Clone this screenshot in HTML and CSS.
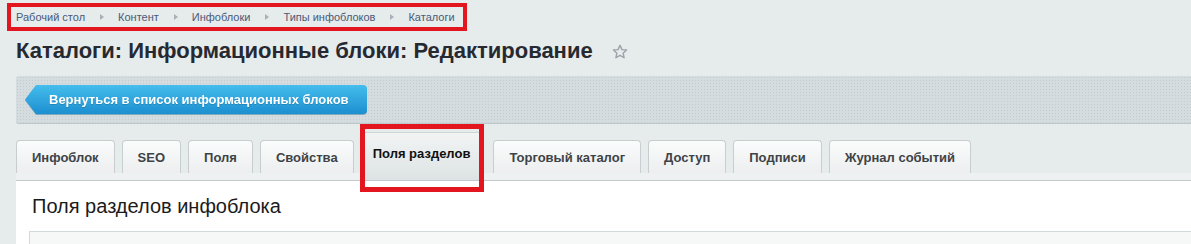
FILE: index.html
```html
<!DOCTYPE html>
<html lang="ru">
<head>
<meta charset="utf-8">
<title>Каталоги: Информационные блоки: Редактирование</title>
<link rel="stylesheet" href="styles.css">
</head>
<body>
<div class="page">
  <div class="crumbs-wrap">
    <nav class="crumbs">
      <a class="crumb">Рабочий стол</a><span class="sep"></span>
      <a class="crumb">Контент</a><span class="sep"></span>
      <a class="crumb">Инфоблоки</a><span class="sep"></span>
      <a class="crumb">Типы инфоблоков</a><span class="sep"></span>
      <a class="crumb">Каталоги</a>
    </nav>
  </div>
  <div class="title-row">
    <h1 class="title">Каталоги: Информационные блоки: Редактирование</h1>
    <svg class="star" width="16" height="16" viewBox="0 0 16 16"><path d="M8 1.3l1.95 4.3 4.6.45-3.45 3.1 1 4.6L8 11.4l-4.1 2.35 1-4.6L1.45 6.05l4.6-.45z" fill="none" stroke="#9aa3a8" stroke-width="1.4" stroke-linejoin="round"/></svg>
  </div>
  <div class="main">
    <div class="toolbar">
      <a class="back-btn"><span class="back-arrow"></span><span class="back-body">Вернуться в список информационных блоков</span></a>
    </div>
    <div class="tabs">
      <div class="tab">Инфоблок</div>
      <div class="tab">SEO</div>
      <div class="tab">Поля</div>
      <div class="tab">Свойства</div>
      <div class="tab tab-active">Поля разделов<span class="mark"></span></div>
      <div class="tab">Торговый каталог</div>
      <div class="tab">Доступ</div>
      <div class="tab">Подписи</div>
      <div class="tab">Журнал событий</div>
    </div>
    <div class="tab-strip"></div>
    <div class="content">
      <div class="content-title">Поля разделов инфоблока</div>
      <div class="inner-box"></div>
    </div>
  </div>
</div>
</body>
</html>
```
FILE: styles.css
```css
html, body {
  margin: 0;
  padding: 0;
}
body {
  background: #e6ebec;
  font-family: "Liberation Sans", Arial, sans-serif;
  overflow: hidden;
  width: 1191px;
  height: 244px;
}
.page {
  padding-top: 3px;
}
.crumbs-wrap {
  padding-left: 7px;
}
.crumbs {
  display: inline-flex;
  align-items: center;
  height: 20px;
  border: 4px solid #e3161f;
  padding: 0 8px 0 5px;
  font-size: 11px;
  color: #4a5a78;
}
.crumb {
  color: #4a5a78;
}
.sep {
  width: 0;
  height: 0;
  border-top: 3.5px solid transparent;
  border-bottom: 3.5px solid transparent;
  border-left: 4px solid #a9b1b8;
  margin: 0 14px 0 15px;
}
.title-row {
  display: flex;
  align-items: center;
  padding-left: 16px;
  margin-top: 7px;
  height: 26px;
}
.title {
  margin: 0;
  font-size: 22px;
  font-weight: bold;
  color: #262a30;
  line-height: 26px;
}
.star {
  margin-left: 19px;
  margin-top: 2px;
}
.main {
  padding-left: 16px;
  margin-top: 12px;
}
.toolbar {
  border-radius: 3px 0 0 3px;
  background-color: #d5dcdf;
  background-image: radial-gradient(circle, #c4ccd0 0.8px, transparent 1px);
  background-size: 3px 3px;
  border-bottom: 1px solid #bfc7ca;
  padding-top: 9px;
  box-sizing: border-box;
  height: 48px;
}
.back-btn {
  display: inline-flex;
  margin-left: 9px;
  height: 29px;
  filter: drop-shadow(0 1px 0 #7fa9bf);
}
.back-arrow {
  width: 11px;
  height: 29px;
  background: linear-gradient(#45bdec, #1c8fd0);
  clip-path: polygon(100% 0, 100% 100%, 0 50%);
}
.back-body {
  display: flex;
  align-items: center;
  height: 29px;
  padding: 0 18px 0 13px;
  border-radius: 0 4px 4px 0;
  background: linear-gradient(#45bdec, #1c8fd0);
  color: #fff;
  font-size: 13px;
  font-weight: bold;
  text-shadow: 0 1px 0 rgba(0,0,0,0.15);
}
.tabs {
  display: flex;
  align-items: flex-end;
  gap: 7px;
  margin-top: 15px;
  height: 34px;
}
.tab {
  position: relative;
  height: 33px;
  box-sizing: border-box;
  padding: 0 15px;
  display: flex;
  align-items: center;
  border: 1px solid #c8cecf;
  border-bottom: none;
  border-radius: 4px 4px 0 0;
  background: linear-gradient(#fbfcfc, #eceeef);
  font-size: 13px;
  font-weight: bold;
  color: #3e4347;
}
.tab-active {
  height: 48px;
  margin-bottom: -7px;
  margin-left: 0;
  margin-right: 4px;
  padding: 0 11px 7px 11px;
  color: #111;
  background: linear-gradient(#f2f4f4, #dde3e4);
  border-color: #d0d5d6;
  z-index: 1;
}
.mark {
  position: absolute;
  left: -2px;
  right: -3px;
  top: -9px;
  bottom: -12px;
  border: 5px solid #e3161f;
  pointer-events: none;
}
.tab-strip {
  background: #edf1f2;
  border-bottom: 1px solid #c4cacc;
  box-sizing: border-box;
  height: 8px;
}
.content {
  background: #fff;
  padding: 13px 0 0 16px;
  height: 200px;
}
.content-title {
  font-size: 20px;
  color: #1b1b1b;
  line-height: 24px;
}
.inner-box {
  margin-top: 13px;
  margin-left: -3px;
  height: 40px;
  border-top: 1px solid #d3d9db;
  border-left: 1px solid #d3d9db;
  background: #f6f8f8;
}
```
